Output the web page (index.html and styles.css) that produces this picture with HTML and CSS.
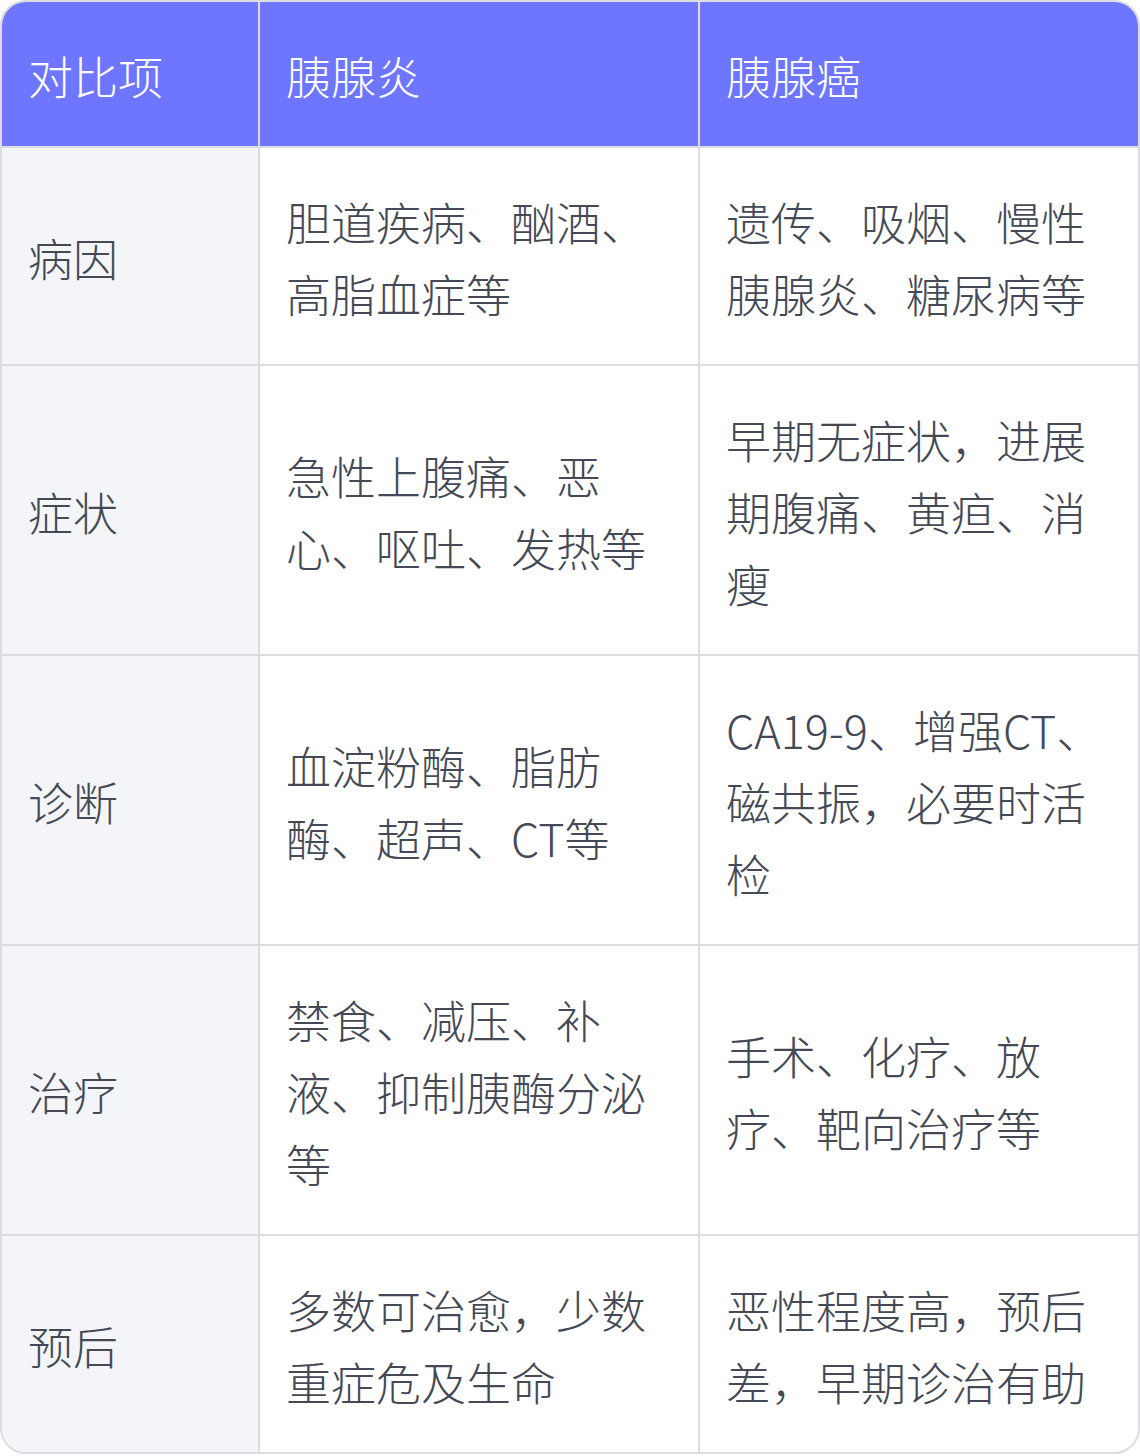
FILE: index.html
```html
<!DOCTYPE html>
<html lang="zh-CN">
<head>
<meta charset="utf-8">
<title>胰腺炎与胰腺癌对比</title>
<link rel="stylesheet" href="styles.css">
</head>
<body>
<div class="wrap">
  <table class="cmp">
    <colgroup>
      <col class="c1"><col class="c2"><col class="c3">
    </colgroup>
    <thead>
      <tr><th>对比项</th><th>胰腺炎</th><th>胰腺癌</th></tr>
    </thead>
    <tbody>
      <tr><td>病因</td><td>胆道疾病、酗酒、高脂血症等</td><td>遗传、吸烟、慢性胰腺炎、糖尿病等</td></tr>
      <tr><td>症状</td><td>急性上腹痛、恶心、呕吐、发热等</td><td>早期无症状，进展期腹痛、黄疸、消瘦</td></tr>
      <tr><td>诊断</td><td>血淀粉酶、脂肪酶、超声、CT等</td><td>CA19-9、增强CT、磁共振，必要时活检</td></tr>
      <tr><td>治疗</td><td>禁食、减压、补液、抑制胰酶分泌等</td><td>手术、化疗、放疗、靶向治疗等</td></tr>
      <tr><td>预后</td><td>多数可治愈，少数重症危及生命</td><td>恶性程度高，预后差，早期诊治有助</td></tr>
    </tbody>
  </table>
</div>
</body>
</html>
```
FILE: styles.css
```css
html, body {
  margin: 0;
  padding: 0;
  background: #ffffff;
}
.wrap {
  width: 1140px;
  box-sizing: border-box;
  border: 2px solid #dcdde2;
  border-radius: 26px;
  overflow: hidden;
  background: #ffffff;
}
.cmp {
  width: 1136px;
  border-collapse: separate;
  border-spacing: 0;
  table-layout: fixed;
  font-family: "Noto Sans CJK SC", "Noto Sans", sans-serif;
  font-weight: 300;
  font-size: 45px;
  line-height: 72px;
  color: #444955;
}
.c1 { width: 258px; }
.c2 { width: 440px; }
.c3 { width: 438px; }
.cmp th,
.cmp td {
  padding: 38px 26px 34px;
  text-align: left;
  vertical-align: middle;
  font-weight: 300;
  border-right: 2px solid #dcdde2;
  border-bottom: 2px solid #dcdde2;
}
.cmp th:last-child,
.cmp td:last-child {
  border-right: none;
}
.cmp tbody tr:last-child td {
  border-bottom: none;
}
.cmp th {
  background: #6e75ff;
  color: #ffffff;
}
.cmp td:first-child {
  background: #f4f5f9;
}
```
